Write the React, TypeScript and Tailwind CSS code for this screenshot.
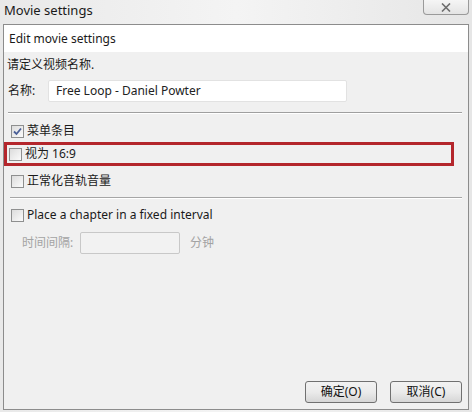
import React from 'react';

const font = { fontFamily: '"Noto Sans", "Noto Sans CJK SC", sans-serif' };

const Check: React.FC<{ checked?: boolean }> = ({ checked }) => (
  <span className="inline-flex w-[13px] h-[13px] border border-[#8e8f8f] bg-gradient-to-br from-[#dcdcdc] to-[#fbfbfb] items-center justify-center shrink-0">
    {checked && (
      <svg width="9" height="9" viewBox="0 0 9 9">
        <path d="M1 4.5 L3.5 7 L8 1.5" stroke="#4a5f97" strokeWidth="1.8" fill="none" />
      </svg>
    )}
  </span>
);

const Btn: React.FC<{ label: string }> = ({ label }) => (
  <button className="w-[72px] h-[22px] rounded-[3px] border border-[#707070] bg-gradient-to-b from-[#f2f2f2] via-[#ebebeb] to-[#d6d6d6] text-[12px] text-[#111] leading-none">
    {label}
  </button>
);

export default function App() {
  return (
    <div style={font} className="w-[472px] h-[412px] bg-gradient-to-r from-[#e9e9e9] via-[#f4f4f4] to-[#e6e6e6] flex flex-col text-[#1a1a1a] overflow-hidden">
      <div className="h-[24px] flex items-start justify-between shrink-0">
        <span className="text-[13px] pl-[4px] pt-[1px]">Movie settings</span>
        <div className="mr-[3px] w-[46px] h-[15px] border border-t-0 border-[#9a9a9a] rounded-b-[4px] bg-gradient-to-b from-[#f5f5f5] to-[#e4e4e4] flex items-center justify-center">
          <svg width="10" height="9" viewBox="0 0 10 9">
            <path d="M1 0.5 L9 8.5 M9 0.5 L1 8.5" stroke="#6d6d6d" strokeWidth="1.6" />
          </svg>
        </div>
      </div>
      <div className="mx-[3px] h-[386px] border border-[#8c8c8c] bg-[#f0f0f0] flex flex-col">
        <div className="h-[27px] bg-white flex items-center pl-[5px] text-[12px] shrink-0">Edit movie settings</div>
        <div className="px-[3px] pt-[5px] text-[12px]">
          <div className="h-[16px] flex items-center">请定义视频名称.</div>
          <div className="flex items-center mt-[7px] h-[22px]">
            <span className="ml-[1px] w-[40px]">名称:</span>
            <div className="w-[299px] h-[22px] bg-white border border-[#e2e2e2] rounded-[2px] flex items-center pl-[7px] text-[12px] text-[#222]">
              Free Loop - Daniel Powter
            </div>
          </div>
          <div className="mt-[10px] mr-[3px] ml-[1px] h-[2px] border-t border-[#9f9f9f] border-b border-b-white" />
          <div className="flex flex-col mt-[7px]">
            <label className="flex items-center gap-[3px] h-[20px] pl-[4px]">
              <Check checked />
              <span>菜单条目</span>
            </label>
            <div className="mt-[1px] -ml-[3px] mr-[11px] h-[24px] border-[3px] border-[#b4262c] flex items-center gap-[3px] pl-[2px]">
              <Check />
              <span>视为 16:9</span>
            </div>
            <label className="flex items-center gap-[3px] h-[24px] pl-[4px] mt-[3px]">
              <Check />
              <span>正常化音轨音量</span>
            </label>
          </div>
          <div className="mt-[4px] mx-[3px] h-[2px] border-t border-[#a6a6a6] border-b border-b-white" />
          <label className="flex items-center gap-[3px] h-[20px] pl-[4px] mt-[6px]">
            <Check />
            <span>Place a chapter in a fixed interval</span>
          </label>
          <div className="flex items-center mt-[7px] h-[22px] text-[#a3a3a3]">
            <span className="ml-[15px] w-[58px]">时间间隔:</span>
            <div className="w-[100px] h-[22px] bg-[#f2f2f2] border border-[#c8c8c8] rounded-[2px]" />
            <span className="ml-[10px]">分钟</span>
          </div>
        </div>
        <div className="flex-1" />
        <div className="flex justify-end gap-[13px] pr-[6px] pb-[6px]">
          <Btn label="确定(O)" />
          <Btn label="取消(C)" />
        </div>
      </div>
    </div>
  );
}
